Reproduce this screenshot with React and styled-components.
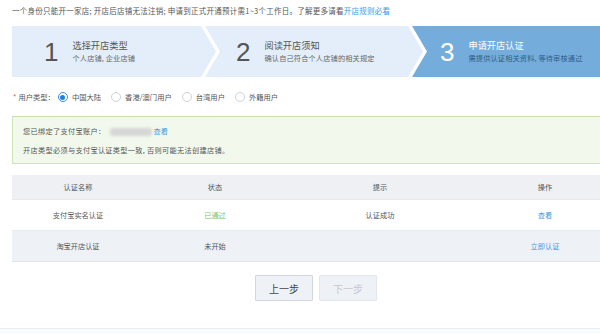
import React from "react";
import styled, { createGlobalStyle } from "styled-components";

const GlobalStyle = createGlobalStyle`
  html, body {
    margin: 0;
    padding: 0;
    background: #fff;
    overflow: hidden;
  }
  body {
    width: 600px;
    font-family: "Noto Sans CJK SC", "Noto Sans", sans-serif;
    color: #555;
  }
  * { box-sizing: border-box; }
`;

const Page = styled.div`
  width: 616px;
  padding-left: 12px;
`;

const Notice = styled.div`
  font-size: 7.5px;
  letter-spacing: 0.25px;
  line-height: 22px;
  height: 22px;
  color: #555;
  margin-bottom: 4px;
  white-space: nowrap;
`;

const Link = styled.a`
  color: #3a9be6;
  text-decoration: none;
  cursor: pointer;
`;

const Steps = styled.div`
  display: flex;
  height: 51px;
  margin-bottom: 10px;
`;

const clips = {
  first: "polygon(0 0, calc(100% - 15px) 0, 100% 50%, calc(100% - 15px) 100%, 0 100%)",
  middle:
    "polygon(0 0, calc(100% - 15px) 0, 100% 50%, calc(100% - 15px) 100%, 0 100%, 15px 50%)",
  last: "polygon(0 0, 100% 0, 100% 100%, 0 100%, 15px 50%)",
};

const Step = styled.div`
  display: flex;
  align-items: center;
  flex: ${(p) => (p.$kind === "last" ? "1 1 auto" : "0 0 auto")};
  width: ${(p) => (p.$width ? `${p.$width}px` : "auto")};
  margin-left: ${(p) => (p.$kind === "first" ? 0 : -11)}px;
  padding-left: ${(p) => p.$pad}px;
  background: ${(p) => (p.$active ? "#74addc" : "#e3eefa")};
  clip-path: ${(p) => clips[p.$kind]};
`;

const StepNum = styled.div`
  font-family: "Liberation Sans", Arial, sans-serif;
  font-size: 26px;
  line-height: 1;
  color: ${(p) => (p.$active ? "#fff" : "#555")};
  width: 14.5px;
`;

const StepText = styled.div`
  margin-left: 14px;
  display: flex;
  flex-direction: column;
`;

const StepTitle = styled.div`
  font-size: 9.2px;
  line-height: 12px;
  color: ${(p) => (p.$active ? "#fff" : "#555")};
  white-space: nowrap;
`;

const StepSub = styled.div`
  margin-top: 2px;
  font-size: 7.2px;
  letter-spacing: 0.15px;
  line-height: 11px;
  color: ${(p) => (p.$active ? "#2f5e88" : "#666")};
  white-space: nowrap;
`;

const RadioRow = styled.div`
  display: flex;
  align-items: center;
  height: 20px;
  font-size: 7.3px;
  color: #555;
  margin-bottom: 9px;
`;

const Required = styled.span`
  color: #e5534b;
  margin-left: 1px;
  margin-right: 2px;
`;

const FieldLabel = styled.span`
  margin-right: 3px;
`;

const RadioItem = styled.label`
  display: flex;
  align-items: center;
  margin-right: 10px;
  cursor: pointer;
`;

const RadioCircle = styled.span`
  width: 10px;
  height: 10px;
  border-radius: 50%;
  border: 1px solid ${(p) => (p.$checked ? "#3d8fe0" : "#cfd3d8")};
  background: #fff;
  display: flex;
  align-items: center;
  justify-content: center;
  margin-right: 4px;
  &::after {
    content: "";
    width: 5px;
    height: 5px;
    border-radius: 50%;
    background: ${(p) => (p.$checked ? "#1f80dc" : "transparent")};
  }
`;

const InfoBox = styled.div`
  border: 1px solid #cfe4b9;
  border-top-color: #c6deac;
  background: #f2f9ec;
  padding: 5px 10px 3px;
  font-size: 7.2px;
  letter-spacing: 0.3px;
  line-height: 19px;
  color: #555;
  margin-bottom: 11px;
`;

const InfoLine = styled.div`
  display: flex;
  align-items: center;
  white-space: nowrap;
`;

const Masked = styled.span`
  display: inline-block;
  width: 42px;
  height: 8px;
  margin: 0 1px 0 5px;
  background: #d6d6d6;
  border-radius: 3px;
  filter: blur(1.5px);
`;

const Table = styled.div`
  display: grid;
  grid-template-columns: 132px 142px 188px 142px;
  font-size: 7.2px;
  color: #555;
  margin-bottom: 13px;
`;

const Cell = styled.div`
  display: flex;
  align-items: center;
  justify-content: center;
  height: ${(p) => (p.$head ? 25 : 31)}px;
  background: ${(p) => (p.$head ? "#eef0f3" : p.$alt ? "#eef1f5" : "#fff")};
  border-bottom: 1px solid ${(p) => (p.$head ? "#e6e8ec" : p.$alt ? "#e1e4e9" : "#e9ebef")};
  color: ${(p) =>
    p.$tone === "green" ? "#86c45e" : p.$tone === "link" ? "#3a9be6" : "#555"};
`;

const Actions = styled.div`
  display: flex;
  justify-content: center;
  gap: 6px;
  padding-left: 4px;
`;

const Button = styled.button`
  width: 58px;
  height: 26px;
  font-family: "Noto Sans CJK SC", sans-serif;
  font-size: 10px;
  background: #eef1f5;
  border: 1px solid ${(p) => (p.disabled ? "#e3e6ea" : "#d2d6dd")};
  color: ${(p) => (p.disabled ? "#c4c8ce" : "#444")};
  border-radius: 1px;
  padding: 0;
  cursor: ${(p) => (p.disabled ? "default" : "pointer")};
`;

const Footer = styled.div`
  margin-top: 27px;
  height: 10px;
  border-top: 1px solid #e6edf6;
  background: #f9fbfd;
`;

const steps = [
  { n: "1", title: "选择开店类型", sub: "个人店铺, 企业店铺", kind: "first", width: 204, pad: 32 },
  { n: "2", title: "阅读开店须知", sub: "确认自己符合个人店铺的相关规定", kind: "middle", width: 218, pad: 31 },
  { n: "3", title: "申请开店认证", sub: "需提供认证相关资料, 等待审核通过", kind: "last", pad: 28, active: true },
];

const radios = [
  { label: "中国大陆", checked: true },
  { label: "香港/澳门用户" },
  { label: "台湾用户" },
  { label: "外籍用户" },
];

const rows = [
  { name: "支付宝实名认证", status: "已通过", tone: "green", tip: "认证成功", op: "查看" },
  { name: "淘宝开店认证", status: "未开始", tip: "", op: "立即认证", alt: true },
];

export default function App() {
  return (
    <>
      <GlobalStyle />
      <Page>
        <Notice>
          一个身份只能开一家店; 开店后店铺无法注销; 申请到正式开通预计需1~3个工作日。了解更多请看
          <Link>开店规则必看</Link>
        </Notice>
        <Steps>
          {steps.map((s) => (
            <Step key={s.n} $kind={s.kind} $width={s.width} $pad={s.pad} $active={s.active}>
              <StepNum $active={s.active}>{s.n}</StepNum>
              <StepText>
                <StepTitle $active={s.active}>{s.title}</StepTitle>
                <StepSub $active={s.active}>{s.sub}</StepSub>
              </StepText>
            </Step>
          ))}
        </Steps>
        <RadioRow>
          <Required>*</Required>
          <FieldLabel>用户类型：</FieldLabel>
          {radios.map((r) => (
            <RadioItem key={r.label}>
              <RadioCircle $checked={r.checked} />
              {r.label}
            </RadioItem>
          ))}
        </RadioRow>
        <InfoBox>
          <InfoLine>
            您已绑定了支付宝账户：<Masked />
            <Link>查看</Link>
          </InfoLine>
          <InfoLine>开店类型必须与支付宝认证类型一致, 否则可能无法创建店铺。</InfoLine>
        </InfoBox>
        <Table>
          {["认证名称", "状态", "提示", "操作"].map((h) => (
            <Cell key={h} $head>
              {h}
            </Cell>
          ))}
          {rows.map((r) => (
            <React.Fragment key={r.name}>
              <Cell $alt={r.alt}>{r.name}</Cell>
              <Cell $alt={r.alt} $tone={r.tone}>
                {r.status}
              </Cell>
              <Cell $alt={r.alt}>{r.tip}</Cell>
              <Cell $alt={r.alt} $tone="link">
                {r.op}
              </Cell>
            </React.Fragment>
          ))}
        </Table>
        <Actions>
          <Button>上一步</Button>
          <Button disabled>下一步</Button>
        </Actions>
      </Page>
      <Footer />
    </>
  );
}
